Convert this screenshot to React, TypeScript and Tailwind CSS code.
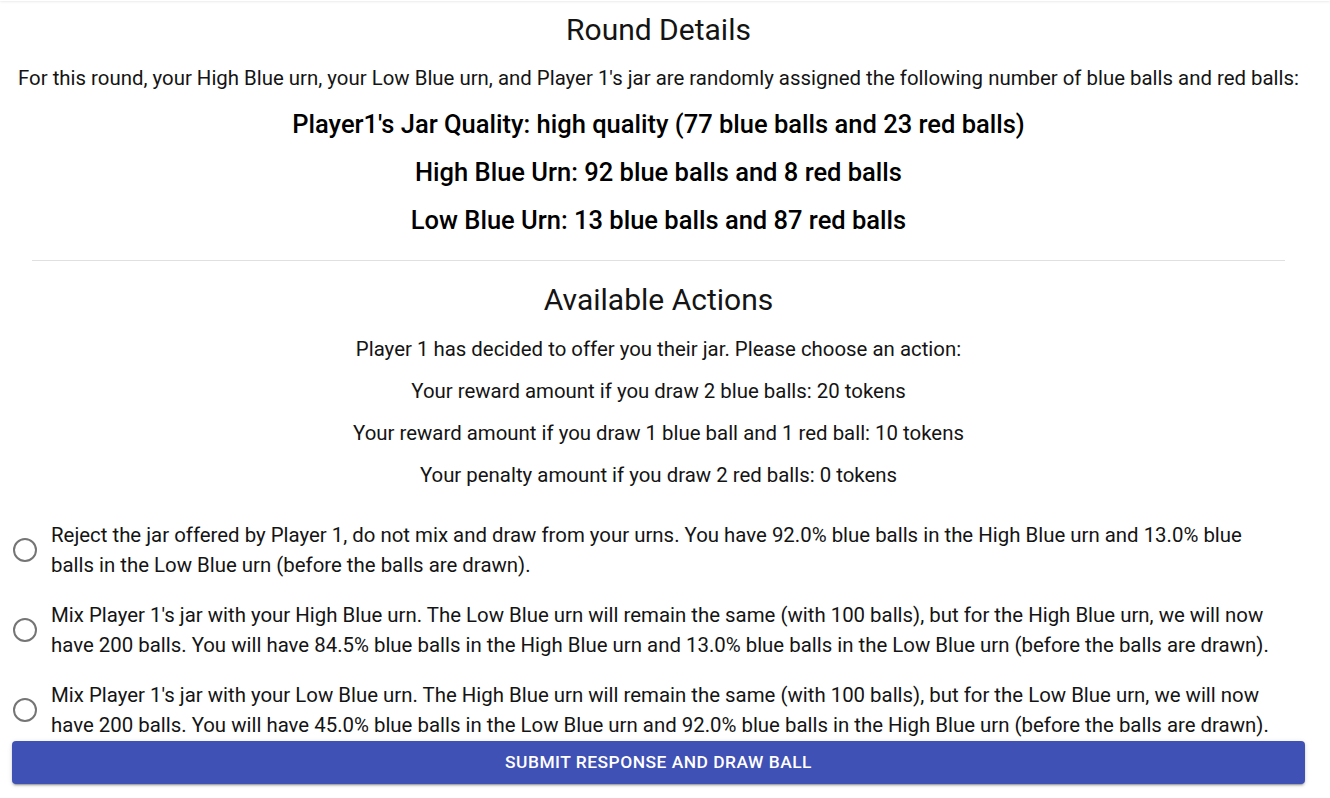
import { useState } from "react";

const options = [
  "Reject the jar offered by Player 1, do not mix and draw from your urns. You have 92.0% blue balls in the High Blue urn and 13.0% blue balls in the Low Blue urn (before the balls are drawn).",
  "Mix Player 1's jar with your High Blue urn. The Low Blue urn will remain the same (with 100 balls), but for the High Blue urn, we will now have 200 balls. You will have 84.5% blue balls in the High Blue urn and 13.0% blue balls in the Low Blue urn (before the balls are drawn).",
  "Mix Player 1's jar with your Low Blue urn. The High Blue urn will remain the same (with 100 balls), but for the Low Blue urn, we will now have 200 balls. You will have 45.0% blue balls in the Low Blue urn and 92.0% blue balls in the High Blue urn (before the balls are drawn).",
];

const rewards = [
  "Player 1 has decided to offer you their jar. Please choose an action:",
  "Your reward amount if you draw 2 blue balls: 20 tokens",
  "Your reward amount if you draw 1 blue ball and 1 red ball: 10 tokens",
  "Your penalty amount if you draw 2 red balls: 0 tokens",
];

export default function App() {
  const [choice, setChoice] = useState<number | null>(null);

  return (
    <div className="min-h-screen bg-white font-['Roboto',sans-serif] text-[#141414]">
      <div className="h-px shadow-[0_0_3px_rgba(0,0,0,0.25)]" />
      <div className="ml-[12px] w-[1293px] flex flex-col">
        <h2 className="mt-[11px] text-center text-[30px] leading-[36px] font-normal">Round Details</h2>
        <p className="mt-[16px] text-center text-[20.4px] leading-[28px]">
          For this round, your High Blue urn, your Low Blue urn, and Player 1's jar are randomly assigned the following number of blue balls and red balls:
        </p>
        <div className="mt-[8px] flex flex-col text-center text-[25.5px] leading-[48px] font-medium text-black">
          <p>Player1's Jar Quality: high quality (77 blue balls and 23 red balls)</p>
          <p>High Blue Urn: 92 blue balls and 8 red balls</p>
          <p>Low Blue Urn: 13 blue balls and 87 red balls</p>
        </div>
        <hr className="mt-[16px] mx-[20px] border-0 border-t border-[#e0e0e0]" />
        <h2 className="mt-[21px] text-center text-[30px] leading-[36px] font-normal">Available Actions</h2>
        <div className="mt-[10px] flex flex-col text-center text-[20.4px] leading-[42px]">
          {rewards.map((r) => (
            <p key={r}>{r}</p>
          ))}
        </div>
        <div className="mt-[24px] flex flex-col gap-[20px]">
          {options.map((o, i) => (
            <label key={i} className="flex items-center gap-[14px] pr-[18px] cursor-pointer" onClick={() => setChoice(i)}>
              <span className="ml-[1px] shrink-0 w-[24px] h-[24px] rounded-full border-[2.5px] border-[#757575] flex items-center justify-center">
                {choice === i && <span className="w-[10px] h-[10px] rounded-full bg-[#3f51b5]" />}
              </span>
              <span className="text-[20.4px] leading-[30px]">{o}</span>
            </label>
          ))}
        </div>
        <button className="mt-[1px] h-[43px] w-full rounded-[4px] bg-[#3f51b5] text-white text-[17.4px] font-medium uppercase tracking-[0.02857em] shadow-[0_3px_1px_-2px_rgba(0,0,0,0.2),0_2px_2px_0_rgba(0,0,0,0.14),0_1px_5px_0_rgba(0,0,0,0.12)]">
          Submit Response and Draw Ball
        </button>
      </div>
    </div>
  );
}
